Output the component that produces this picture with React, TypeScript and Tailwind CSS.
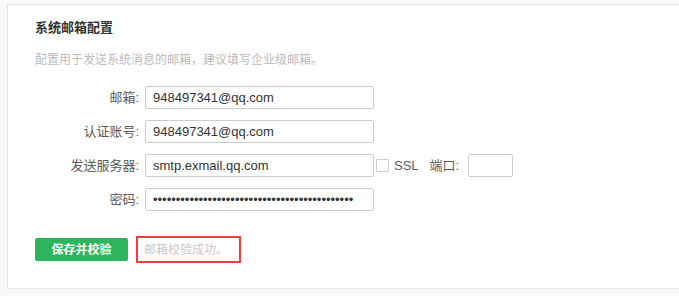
const cjk = "font-['Liberation_Sans','Noto_Sans_CJK_SC',sans-serif]";

const Row = ({ label, children }: { label: string; children: React.ReactNode }) => (
    <div className="flex items-center h-[23px]">
        <label className="w-[106px] pr-[1px] text-right text-[13px] text-[#5a5a5a] leading-[23px]">{label}</label>
        <div className="ml-[5px] flex items-center">{children}</div>
    </div>
);

const inputCls =
    "h-[23px] border border-[#cccccc] rounded-[2px] px-[7px] text-[13px] text-[#333] outline-none bg-white font-['Liberation_Sans',sans-serif]";

const App = () => {
    return (
        <div className={`w-[679px] h-[296px] overflow-hidden bg-[#f7f8fa] pt-[4px] pl-[7px] ${cjk}`}>
            <div className="w-[700px] h-[285px] bg-white border border-[#e4e5e7] pl-[27px] pt-[14px]">
                {/* Title */}
                <h2 className="text-[13px] font-semibold text-[#333] leading-[18px]">系统邮箱配置</h2>
                <p className="mt-[14px] text-[12px] text-[#bbbbbb] leading-[18px]">
                    配置用于发送系统消息的邮箱，建议填写企业级邮箱。
                </p>
                {/* Form */}
                <div className="mt-[17px] flex flex-col gap-[11px] ml-[-1px]">
                    <Row label="邮箱:">
                        <input className={`${inputCls} w-[229px]`} defaultValue="948497341@qq.com" />
                    </Row>
                    <Row label="认证账号:">
                        <input className={`${inputCls} w-[229px]`} defaultValue="948497341@qq.com" />
                    </Row>
                    <Row label="发送服务器:">
                        <input className={`${inputCls} w-[229px]`} defaultValue="smtp.exmail.qq.com" />
                        <span className="ml-[2px] w-[13px] h-[13px] border border-[#cccccc] rounded-[1px] bg-white" />
                        <span className="ml-[5px] text-[13px] text-[#5a5a5a]">SSL</span>
                        <span className="ml-[11px] text-[13px] text-[#5a5a5a]">端口:</span>
                        <input className={`${inputCls} ml-[9px] w-[45px]`} defaultValue="" />
                    </Row>
                    <Row label="密码:">
                        <input
                            type="password"
                            className={`${inputCls} w-[229px] text-[9px]`}
                            defaultValue="12345678901234567890123456789012345678901234"
                        />
                    </Row>
                </div>
                {/* Actions */}
                <div className="mt-[25px] flex items-center">
                    <button className="w-[93px] h-[23px] bg-[#2db55d] rounded-[2px] text-white text-[12px] font-bold">
                        保存并校验
                    </button>
                    <div className="ml-[8px] w-[105px] h-[27px] border-2 border-[#f03c3c] flex items-center pl-[6px] text-[12px] text-[#c8c8c8]">
                        邮箱校验成功。
                    </div>
                </div>
            </div>
        </div>
    );
};

export default App;
